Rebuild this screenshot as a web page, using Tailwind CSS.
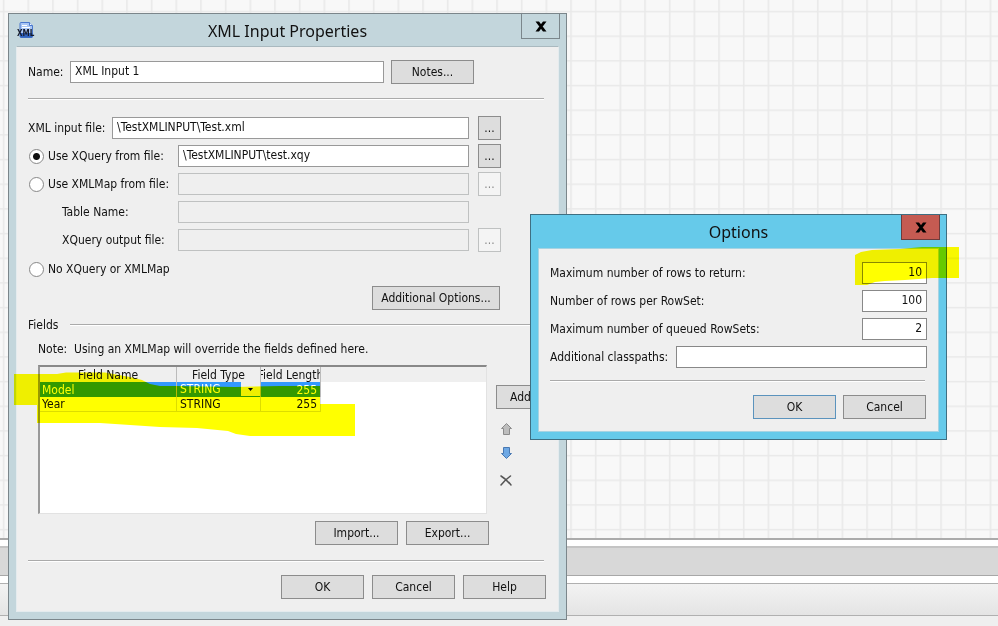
<!DOCTYPE html>
<html lang="en">
<head>
  <meta charset="UTF-8">
  <title>XML Input Properties</title>
  <meta name="viewport" content="width=device-width, initial-scale=1">
  <script src="https://cdn.jsdelivr.net/npm/@tailwindcss/browser@4"></script>
</head>
<body class="relative flex flex-col h-screen overflow-hidden bg-[#efefef] font-['DejaVu_Sans_Condensed','Roboto',sans-serif] text-xs text-[#111]">

  <!-- ========== CANVAS ========== -->
  <div class="flex-1 min-h-0 bg-[#f8f8f8]">
    <svg class="block w-full h-full" aria-hidden="true">
      <defs>
        <pattern id="grid" x="2.8" y="10.8" width="24.67" height="24.67" patternUnits="userSpaceOnUse">
          <path d="M0 .8H24.67M.8 0V24.67" stroke="#e9e9e9" stroke-width="1.6" fill="none"/>
        </pattern>
      </defs>
      <rect width="100%" height="100%" fill="url(#grid)"/>
    </svg>
  </div>
  <div class="h-2 border-t-2 border-[#ababab] bg-white"></div>
  <div class="h-[30px] border-t-2 border-b border-t-[#c4c4c4] border-b-[#a8a8a8] bg-[#d8d8d8]"></div>
  <div class="h-[7px] bg-white"></div>
  <div class="h-[33px] border-y border-[#b0b0b0] bg-linear-to-b from-[#f3f3f3] to-[#e4e4e4]"></div>
  <div class="h-[10px]"></div>

  <!-- ========== PROPERTIES DIALOG ========== -->
  <section class="absolute left-2 top-[13px] w-[559px] border border-[#7b868b] bg-[#c3d6dc] px-[7px] pb-[7px]" aria-labelledby="propsTitle">
    <header class="grid grid-cols-[1fr_auto_1fr] h-8">
      <svg class="ml-[2px] mt-2 w-4 h-4 overflow-visible" viewBox="0 0 16 16" aria-hidden="true">
        <path d="M2 1.5Q2 .5 3 .5H11.500L14.500 3.500V14Q14.500 15.500 13 15.500H3Q2 15.500 2 14.500Z" fill="#a9c6f5" stroke="#4a78cd"/>
        <path d="M2 11H14.500V15.500H3Q2 15.500 2 14Z" fill="#2f62be"/>
        <path d="M11.500.5V3.500H14.500" fill="#f4f8ff" stroke="#4a78cd"/>
        <path d="M4 3.500H9M4 5.500H12" stroke="#fff"/>
        <text x="-1" y="14" font-size="8" font-weight="700" fill="#151b2b">XML</text>
      </svg>
      <h1 id="propsTitle" class="pt-[5px] font-['Noto_Sans',sans-serif] text-base leading-6">XML Input Properties</h1>
      <button type="button" aria-label="Close" class="-mr-px justify-self-end flex items-center justify-center w-[39px] h-[25px] border border-t-0 border-[#7b868b]">
        <svg class="w-3 h-[11px]" viewBox="0 0 12 11"><path d="M.5.5H4L11.500 10.500H8ZM8 .5H11.500L4 10.500H.5Z" fill="#000"/></svg>
      </button>
    </header>

    <div class="border border-[#e4ebee] border-t-[#a9b9bf] bg-[#efefef] pl-[11px] pr-[14px] pt-[13px] pb-3">
      <div class="flex items-center h-6">
        <label for="name" class="w-[42px]">Name:</label>
        <input id="name" value="XML Input 1" class="w-[314px] h-[22px] mr-[7px] border border-[#999] bg-white px-1 pb-[2px]">
        <button type="button" class="w-[83px] h-6 border border-[#8c8c8c] bg-[#ddd]">Notes...</button>
      </div>
      <hr class="mt-[14px] h-[2px] border-t border-[#aaa] bg-white">

      <div class="mt-[14px] flex items-center h-7">
        <label for="xmlFile" class="w-[84px]">XML input file:</label>
        <input id="xmlFile" value="\TestXMLINPUT\Test.xml" class="w-[357px] h-[22px] mr-[9px] border border-[#999] bg-white px-1 pb-[2px]">
        <button type="button" aria-label="Browse XML input file" class="w-[23px] h-6 border border-[#8c8c8c] bg-[#ddd]">...</button>
      </div>
      <div class="flex items-center h-7">
        <input id="useXquery" type="radio" name="source" checked class="appearance-none w-[15px] h-[15px] ml-px mr-1 rounded-full border border-[#888] bg-white checked:bg-[radial-gradient(#111_0_3px,#fff_4px)]">
        <label for="useXquery" class="w-[130px]">Use XQuery from file:</label>
        <input aria-label="XQuery file" value="\TestXMLINPUT\test.xqy" class="w-[291px] h-[22px] mr-[9px] border border-[#999] bg-white px-1 pb-[2px]">
        <button type="button" aria-label="Browse XQuery file" class="w-[23px] h-6 border border-[#8c8c8c] bg-[#ddd]">...</button>
      </div>
      <div class="flex items-center h-7">
        <input id="useXmlmap" type="radio" name="source" class="appearance-none w-[15px] h-[15px] ml-px mr-1 rounded-full border border-[#888] bg-white">
        <label for="useXmlmap" class="w-[130px]">Use XMLMap from file:</label>
        <input aria-label="XMLMap file" disabled class="w-[291px] h-[22px] mr-[9px] border border-[#bfc1c1] px-1">
        <button type="button" disabled aria-label="Browse XMLMap file" class="w-[23px] h-6 border border-[#bfc1c1] bg-[#f4f4f4] text-[#888]">...</button>
      </div>
      <div class="flex items-center h-7">
        <label for="tableName" class="w-[150px] pl-[34px]">Table Name:</label>
        <input id="tableName" disabled class="w-[291px] h-[22px] border border-[#bfc1c1] px-1">
      </div>
      <div class="flex items-center h-7">
        <label for="outFile" class="w-[150px] pl-[34px]">XQuery output file:</label>
        <input id="outFile" disabled class="w-[291px] h-[22px] mr-[9px] border border-[#bfc1c1] px-1">
        <button type="button" disabled aria-label="Browse output file" class="w-[23px] h-6 border border-[#bfc1c1] bg-[#f4f4f4] text-[#888]">...</button>
      </div>
      <div class="flex items-center h-7 mt-px">
        <input id="noXquery" type="radio" name="source" class="appearance-none w-[15px] h-[15px] ml-px mr-1 rounded-full border border-[#888] bg-white">
        <label for="noXquery">No XQuery or XMLMap</label>
      </div>
      <div class="flex justify-end mt-[3px] mr-11">
        <button type="button" class="w-32 h-6 border border-[#8c8c8c] bg-[#ddd]">Additional Options...</button>
      </div>

      <!-- Fields -->
      <div class="flex items-center mt-[3px] h-6">
        <h2 class="w-[42px]">Fields</h2>
        <hr class="flex-1 h-[2px] border-t border-[#aaa] bg-white">
      </div>
      <p class="pl-[10px] leading-6">Note: &nbsp;Using an XMLMap will override the fields defined here.</p>

      <div class="flex mt-1 pl-[10px]">
        <div class="w-[449px] h-[149px] border-t-2 border-l-2 border-r border-b border-t-[#888] border-l-[#999] border-r-[#e2e2e2] border-b-[#e2e2e2] bg-[linear-gradient(#efefef_15px,#fff_15px)]">
          <table class="w-[281px] table-fixed border-separate border-spacing-0 leading-[14px]">
            <colgroup><col class="w-[137px]"><col class="w-[84px]"><col class="w-[60px]"></colgroup>
            <thead>
              <tr class="h-[15px]">
                <th class="p-0 font-normal border-r border-[#bbb]">Field Name</th>
                <th class="p-0 font-normal border-r border-[#bbb]">Field Type</th>
                <th class="p-0 font-normal border-r border-[#bbb]"><div class="flex justify-center overflow-hidden whitespace-nowrap">Field Length</div></th>
              </tr>
            </thead>
            <tbody>
              <tr class="h-[15px] bg-[#39f] text-white">
                <td class="p-0 pl-[2px] border-r border-[#bbb]">Model</td>
                <td class="p-0 pl-[3px] border-r border-[#bbb]">
                  <div class="flex justify-between">
                    <select aria-label="Field type" class="appearance-none w-[58px] h-[15px] leading-[15px]"><option>STRING</option></select>
                    <span class="flex items-center justify-center w-[19px] h-[14px] bg-[#efefef]">
                      <svg class="w-[5px] h-[3px]" viewBox="0 0 5 3"><path d="M0 0H5L2.500 3Z" fill="#000"/></svg>
                    </span>
                  </div>
                </td>
                <td class="p-0 pr-[3px] text-right border-r border-[#bbb]">255</td>
              </tr>
              <tr class="h-[15px] bg-white">
                <td class="p-0 pl-[2px] border-r border-b border-[#ddd]">Year</td>
                <td class="p-0 pl-[3px] border-r border-b border-[#ddd]">STRING</td>
                <td class="p-0 pr-[3px] text-right border-r border-b border-[#ddd]">255</td>
              </tr>
            </tbody>
          </table>
        </div>

        <div class="flex flex-col items-start ml-[9px] mt-5">
          <button type="button" class="w-[48px] h-6 border border-[#8c8c8c] bg-[#ddd] pl-[13px] text-left whitespace-nowrap overflow-hidden">Add...</button>
          <button type="button" aria-label="Move up" class="mt-[14px] ml-[5px]">
            <svg class="w-[11px] h-3" viewBox="0 0 11 12"><path d="M5.500.5 10.500 5.500H8.500V11.500H2.500V5.500H.5Z" fill="#bdbdbd" stroke="#8b8b8b"/></svg>
          </button>
          <button type="button" aria-label="Move down" class="mt-3 ml-[5px]">
            <svg class="w-[11px] h-3" viewBox="0 0 11 12"><path d="M5.500 11.500 10.500 6.500H8.500V.5H2.500V6.500H.5Z" fill="#6ea8e4" stroke="#4878b2"/></svg>
          </button>
          <button type="button" aria-label="Delete" class="mt-4 ml-1">
            <svg class="w-3 h-[11px]" viewBox="0 0 12 11"><path d="M1 1Q6 4 11 10M10.500 1Q5 5 1 10" stroke="#555" stroke-width="1.500" stroke-linecap="round" fill="none"/></svg>
          </button>
        </div>
      </div>

      <div class="flex justify-end gap-2 mt-[7px] mr-[55px]">
        <button type="button" class="w-[83px] h-6 border border-[#8c8c8c] bg-[#ddd]">Import...</button>
        <button type="button" class="w-[83px] h-6 border border-[#8c8c8c] bg-[#ddd]">Export...</button>
      </div>
      <hr class="mt-[15px] h-[2px] border-t border-[#aaa] bg-white">
      <div class="flex justify-end gap-2 mt-[13px] -mr-[2px]">
        <button type="button" class="w-[83px] h-6 border border-[#8c8c8c] bg-[#ddd]">OK</button>
        <button type="button" class="w-[83px] h-6 border border-[#8c8c8c] bg-[#ddd]">Cancel</button>
        <button type="button" class="w-[83px] h-6 border border-[#8c8c8c] bg-[#ddd]">Help</button>
      </div>
    </div>
  </section>

  <!-- ========== OPTIONS DIALOG ========== -->
  <section class="absolute left-[530px] top-[214px] w-[417px] border border-[#3f6f82] bg-[#66caea] px-[7px] pb-[7px]" aria-labelledby="optTitle">
    <header class="grid grid-cols-[1fr_auto_1fr] h-[33px]">
      <span></span>
      <h1 id="optTitle" class="pt-[5px] font-['Noto_Sans',sans-serif] text-base leading-6">Options</h1>
      <button type="button" aria-label="Close" class="-mr-px justify-self-end flex items-center justify-center w-[39px] h-[25px] border border-t-0 border-[#6d3c3c] bg-[#c55b52]">
        <svg class="w-3 h-[11px]" viewBox="0 0 12 11"><path d="M.5.5H4L11.500 10.500H8ZM8 .5H11.500L4 10.500H.5Z" fill="#000"/></svg>
      </button>
    </header>

    <div class="border border-[#a7d3e2] bg-[#efefef] px-[11px] pt-[10px] pb-3">
      <div class="flex items-center justify-between h-7">
        <label for="maxRows">Maximum number of rows to return:</label>
        <input id="maxRows" value="10" class="w-[65px] h-[22px] border border-[#888] bg-white px-1 pb-[2px] text-right">
      </div>
      <div class="flex items-center justify-between h-7">
        <label for="rowSet">Number of rows per RowSet:</label>
        <input id="rowSet" value="100" class="w-[65px] h-[22px] border border-[#888] bg-white px-1 pb-[2px] text-right">
      </div>
      <div class="flex items-center justify-between h-7">
        <label for="queued">Maximum number of queued RowSets:</label>
        <input id="queued" value="2" class="w-[65px] h-[22px] border border-[#888] bg-white px-1 pb-[2px] text-right">
      </div>
      <div class="flex items-center h-7">
        <label for="classpaths" class="w-[126px]">Additional classpaths:</label>
        <input id="classpaths" class="flex-1 min-w-0 h-[22px] border border-[#888] bg-white px-1">
      </div>
      <hr class="mt-[9px] mr-[2px] h-[2px] border-t border-[#aaa] bg-white">
      <div class="flex justify-end gap-[7px] mt-[13px] mr-px">
        <button type="button" class="w-[83px] h-6 border border-[#5b93bd] bg-[#ddd]">OK</button>
        <button type="button" class="w-[83px] h-6 border border-[#8c8c8c] bg-[#ddd]">Cancel</button>
      </div>
    </div>
  </section>

  <!-- ========== HIGHLIGHTER ========== -->
  <svg class="absolute inset-0 w-full h-full mix-blend-multiply pointer-events-none" aria-hidden="true">
    <path d="M14 374H57L66 372.500H105L130 377 142 380 150 384 160 386H175L235 387 280 386H320V404H355V436H250L236 434 228 431 197 428 160 427 130 425 100 423H37V405H14Z" fill="#ff0"/>
    <path d="M855 255 861 252 872 250 900 249 922 247H959V278H932L905 280 885 281 875 282 867 285H855Z" fill="#ff0"/>
  </svg>
</body>
</html>
